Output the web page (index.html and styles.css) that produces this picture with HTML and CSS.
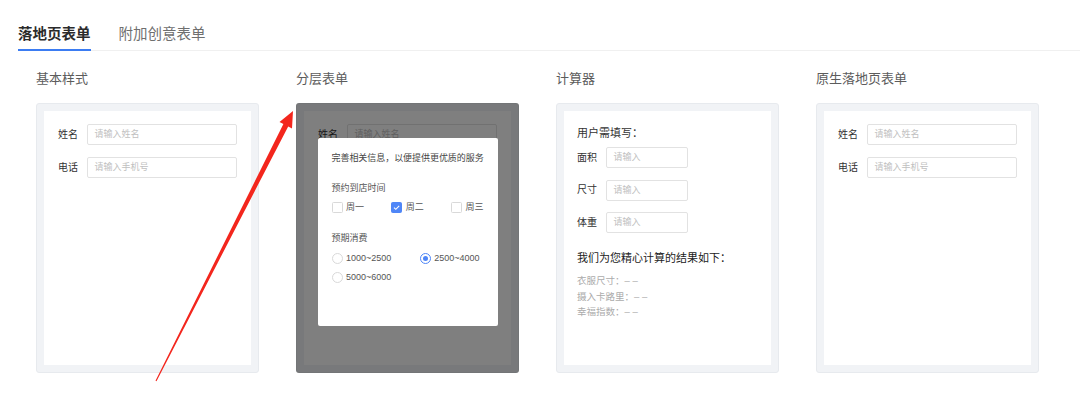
FILE: index.html
```html
<!DOCTYPE html>
<html lang="zh-CN">
<head>
<meta charset="utf-8">
<title>表单</title>
<link rel="stylesheet" href="styles.css">
</head>
<body>
<div class="tabbar">
  <div class="tab active">落地页表单</div>
  <div class="tab">附加创意表单</div>
</div>
<div class="grid">
  <div class="col">
    <div class="title">基本样式</div>
    <div class="card">
      <div class="inner basic">
        <div class="row"><span class="lbl">姓名</span><div class="ipt">请输入姓名</div></div>
        <div class="row"><span class="lbl">电话</span><div class="ipt">请输入手机号</div></div>
      </div>
    </div>
  </div>
  <div class="col">
    <div class="title">分层表单</div>
    <div class="card layered">
      <div class="inner basic">
        <div class="row"><span class="lbl">姓名</span><div class="ipt">请输入姓名</div></div>
        <div class="row"><span class="lbl">电话</span><div class="ipt">请输入手机号</div></div>
      </div>
      <div class="mask"></div>
      <div class="modal">
        <div class="m-title">完善相关信息，以便提供更优质的服务</div>
        <div class="m-label">预约到店时间</div>
        <div class="checks">
          <div class="opt w"><span class="cb"></span>周一</div>
          <div class="opt w"><span class="cb on"><svg viewBox="0 0 11 11" width="11" height="11"><path d="M3 5.6 L4.8 7.3 L8.2 3.8" fill="none" stroke="#fff" stroke-width="1.1"/></svg></span>周二</div>
          <div class="opt"><span class="cb"></span>周三</div>
        </div>
        <div class="m-label second">预期消费</div>
        <div class="radios">
          <div class="opt"><span class="rd"></span>1000~2500</div>
          <div class="opt"><span class="rd on"></span>2500~4000</div>
          <div class="opt"><span class="rd"></span>5000~6000</div>
        </div>
      </div>
    </div>
  </div>
  <div class="col">
    <div class="title">计算器</div>
    <div class="card">
      <div class="inner calc">
        <div class="c-head">用户需填写：</div>
        <div class="c-row"><span class="lbl">面积</span><div class="ipt small">请输入</div></div>
        <div class="c-row"><span class="lbl">尺寸</span><div class="ipt small">请输入</div></div>
        <div class="c-row"><span class="lbl">体重</span><div class="ipt small">请输入</div></div>
        <div class="c-head result">我们为您精心计算的结果如下：</div>
        <div class="res">衣服尺寸：– –</div>
        <div class="res">摄入卡路里：– –</div>
        <div class="res">幸福指数：– –</div>
      </div>
    </div>
  </div>
  <div class="col">
    <div class="title">原生落地页表单</div>
    <div class="card">
      <div class="inner basic">
        <div class="row"><span class="lbl">姓名</span><div class="ipt">请输入姓名</div></div>
        <div class="row"><span class="lbl">电话</span><div class="ipt">请输入手机号</div></div>
      </div>
    </div>
  </div>
</div>
<svg class="arrow" width="1080" height="413" viewBox="0 0 1080 413">
  <polygon fill="#f3261d" points="293,111 292,128.4 288.2,126.4 156.5,381.3 155.5,380.7 283.4,124 279.5,122.1"/>
</svg>
</body>
</html>
```
FILE: styles.css
```css
html, body {
  margin: 0;
  padding: 0;
  background: #fff;
}
body {
  font-family: "Liberation Sans", "Noto Sans CJK SC", sans-serif;
  color: #333;
  position: relative;
  width: 1080px;
  height: 413px;
  overflow: hidden;
}
.tabbar {
  display: flex;
  gap: 28px;
  margin-left: 18px;
  border-bottom: 1px solid #f0f0f0;
}
.tab {
  font-size: 14.5px;
  line-height: 20px;
  padding: 24px 0 5px;
  border-bottom: 2px solid transparent;
  margin-bottom: -1px;
  color: #6f6f6f;
}
.tab.active {
  color: #2b2b2b;
  font-weight: 600;
  border-bottom-color: #3b7cf2;
}
.grid {
  display: grid;
  grid-template-columns: repeat(4, 223px);
  column-gap: 37px;
  padding: 19px 0 0 36px;
}
.title {
  font-size: 13px;
  line-height: 18px;
  color: #5c5c5c;
  margin-bottom: 15px;
}
.card {
  position: relative;
  box-sizing: border-box;
  height: 270px;
  border: 1px solid #e7eaee;
  border-radius: 3px;
  background: #f1f3f6;
  padding: 7px;
}
.inner {
  background: #fff;
  height: 100%;
  box-sizing: border-box;
}
.basic {
  padding: 13px 14px;
}
.row {
  display: flex;
  align-items: center;
  height: 21px;
  margin-bottom: 12px;
}
.lbl {
  width: 29px;
  flex: none;
  font-size: 10px;
  line-height: 14px;
  color: #333;
}
.ipt {
  box-sizing: border-box;
  height: 21px;
  flex: 1;
  border: 1px solid #e2e2e2;
  border-radius: 2px;
  font-size: 9px;
  line-height: 19px;
  color: #c0c0c0;
  padding-left: 6.5px;
}
.ipt.small {
  flex: none;
  width: 82px;
}
.calc {
  padding: 14px 13px;
}
.c-head {
  font-size: 11px;
  line-height: 16px;
  color: #333;
  margin-bottom: 6px;
  white-space: nowrap;
}
.c-head.result {
  color: #222;
  margin-top: 17px;
  margin-bottom: 7px;
}
.c-row {
  display: flex;
  align-items: center;
  height: 21px;
  margin-bottom: 11.5px;
}
.c-row:nth-of-type(4) {
  margin-bottom: 0;
}
.res {
  font-size: 9.5px;
  line-height: 15.6px;
  color: #ababab;
  white-space: nowrap;
}
.mask {
  position: absolute;
  inset: -1px;
  border-radius: 3px;
  background: rgba(0, 0, 0, 0.5);
}
.modal {
  position: absolute;
  top: 34px;
  left: 20.5px;
  width: 180px;
  height: 188px;
  box-sizing: border-box;
  background: #fff;
  border-radius: 2px;
  padding: 14px 12px 14px 14px;
  font-size: 9px;
  line-height: 13px;
  color: #555;
  white-space: nowrap;
}
.m-title {
  color: #444;
  letter-spacing: -0.05px;
}
.m-label {
  margin-top: 16.5px;
}
.m-label.second {
  margin-top: 18px;
}
.checks {
  display: flex;
  margin-top: 6.5px;
}
.opt {
  display: flex;
  align-items: center;
  height: 13px;
}
.opt.w {
  width: 59.7px;
}
.cb {
  box-sizing: border-box;
  width: 11px;
  height: 11px;
  border: 1px solid #d9d9d9;
  border-radius: 1.5px;
  margin-right: 3.5px;
  flex: none;
  position: relative;
}
.cb.on {
  background: #4f86f7;
  border-color: #4f86f7;
}
.cb svg {
  position: absolute;
  left: -1px;
  top: -1px;
}
.radios {
  display: grid;
  grid-template-columns: 88.3px auto;
  row-gap: 6px;
  margin-top: 7px;
}
.rd {
  box-sizing: border-box;
  width: 11px;
  height: 11px;
  border: 1px solid #d9d9d9;
  border-radius: 50%;
  margin-right: 3.5px;
  flex: none;
  position: relative;
}
.rd.on {
  border-color: #4f86f7;
}
.rd.on::after {
  content: "";
  position: absolute;
  left: 2px;
  top: 2px;
  width: 5px;
  height: 5px;
  border-radius: 50%;
  background: #4f86f7;
}
.arrow {
  position: absolute;
  left: 0;
  top: 0;
  pointer-events: none;
}
```
